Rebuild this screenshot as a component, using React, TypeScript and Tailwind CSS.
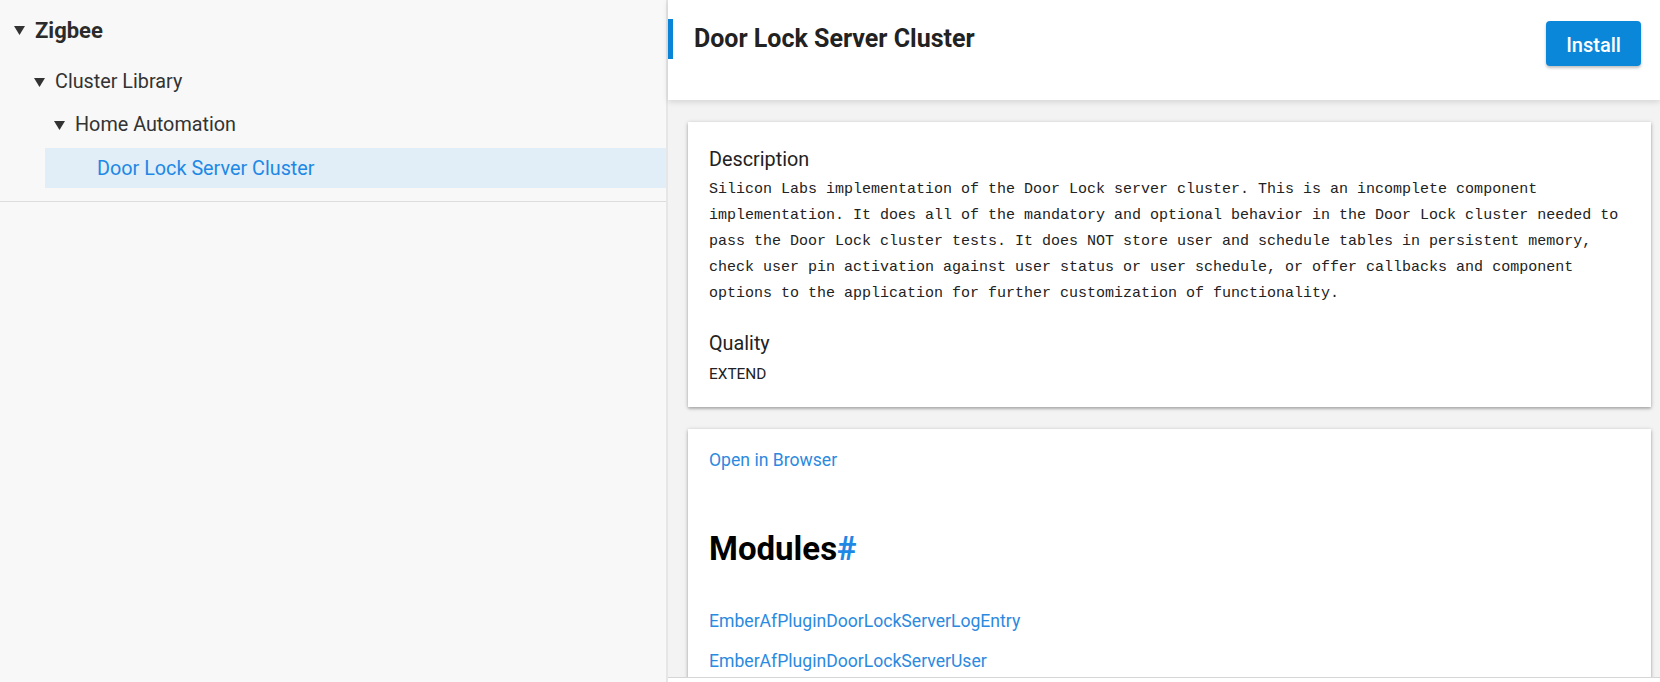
import React from 'react';

const ui = { fontFamily: 'Roboto, "Liberation Sans", sans-serif' };
const mono = { fontFamily: '"Liberation Mono", "Courier New", monospace' };

function Caret() {
  return (
    <svg width="11" height="9" viewBox="0 0 11 9" className="shrink-0">
      <polygon points="0,0 11,0 5.5,9" fill="#333" />
    </svg>
  );
}

const description =
  'Silicon Labs implementation of the Door Lock server cluster. This is an incomplete component implementation. It does all of the mandatory and optional behavior in the Door Lock cluster needed to pass the Door Lock cluster tests. It does NOT store user and schedule tables in persistent memory, check user pin activation against user status or user schedule, or offer callbacks and component options to the application for further customization of functionality.';

const modules = ['EmberAfPluginDoorLockServerLogEntry', 'EmberAfPluginDoorLockServerUser'];

export default function App() {
  return (
    <div className="flex h-[682px] w-[1660px] overflow-hidden bg-white text-[#333]" style={ui}>
      {/* Sidebar tree */}
      <aside className="w-[668px] shrink-0 bg-[#f8f8f8] border-r-2 border-[#e6e6e6]">
        <div className="pt-[8px] pb-[13px] border-b border-[#dcdcdc]">
          <div className="flex items-center gap-[10px] h-[44px] pl-[14px]">
            <Caret />
            <span className="text-[22px] font-bold text-[#2b2b2b]">Zigbee</span>
          </div>
          <div className="flex items-center gap-[10px] h-[40px] mt-[9px] pl-[34px] pt-[2px]">
            <Caret />
            <span className="text-[19.8px] text-[#333]">Cluster Library</span>
          </div>
          <div className="flex items-center gap-[10px] h-[40px] mt-[3px] pl-[54px] pt-[2px]">
            <Caret />
            <span className="text-[19.8px] text-[#333]">Home Automation</span>
          </div>
          <div className="flex items-center h-[40px] mt-[4px] ml-[45px] pl-[52px] pt-[2px] bg-[#e1edf7]">
            <span className="text-[19.8px] text-[#1e88e5]">Door Lock Server Cluster</span>
          </div>
        </div>
      </aside>

      {/* Main pane */}
      <main className="flex-1 flex flex-col min-w-0">
        <header className="relative z-10 h-[100px] shrink-0 bg-white flex items-start justify-between shadow-[0_2px_6px_rgba(0,0,0,0.13)]">
          <div className="mt-[19px] h-[40px] border-l-[5px] border-[#0a84d6] pl-[21px]">
            <h1 className="text-[25px] leading-[40px] font-bold text-[#222]">Door Lock Server Cluster</h1>
          </div>
          <button className="mt-[21px] mr-[19px] w-[95px] h-[45px] pt-[3px] rounded-[4px] bg-[#0b87da] text-white text-[20px] font-medium shadow-[0_2px_3px_rgba(0,0,0,0.25)]">
            Install
          </button>
        </header>

        <div className="flex-1 overflow-hidden bg-[#f3f3f3] pt-[22px] pl-[20px] pr-[9px]">
          <section className="bg-white pt-[26px] pb-[23px] px-[21px] shadow-[0_1px_4px_rgba(0,0,0,0.28),0_2px_2px_rgba(0,0,0,0.12)]">
            <h2 className="text-[19.8px] leading-[24px] text-[#222]">Description</h2>
            <p className="mt-[5px] text-[15px] leading-[26px] text-[#222]" style={mono}>
              {description}
            </p>
            <h2 className="mt-[25px] text-[19.8px] leading-[24px] text-[#222]">Quality</h2>
            <div className="mt-[8px] text-[15.4px] leading-[20px] text-[#222]">EXTEND</div>
          </section>

          <section className="mt-[22px] bg-white pt-[19px] px-[21px] pb-[40px] shadow-[0_1px_4px_rgba(0,0,0,0.28),0_2px_2px_rgba(0,0,0,0.12)]">
            <a className="block text-[17.6px] leading-[24px] text-[#2b8ae0]">Open in Browser</a>
            <h2 className="mt-[57px] text-[33px] leading-[40px] font-bold text-black">
              Modules<span className="text-[#1e88e5]">#</span>
            </h2>
            <div className="mt-[40px] flex flex-col gap-[16px]">
              {modules.map((m) => (
                <a key={m} className="block text-[17.6px] leading-[24px] text-[#2b8ae0]">
                  {m}
                </a>
              ))}
            </div>
          </section>
        </div>

        <div className="h-[5px] shrink-0 bg-white border-t border-[#d6d6d6]" />
      </main>
    </div>
  );
}
